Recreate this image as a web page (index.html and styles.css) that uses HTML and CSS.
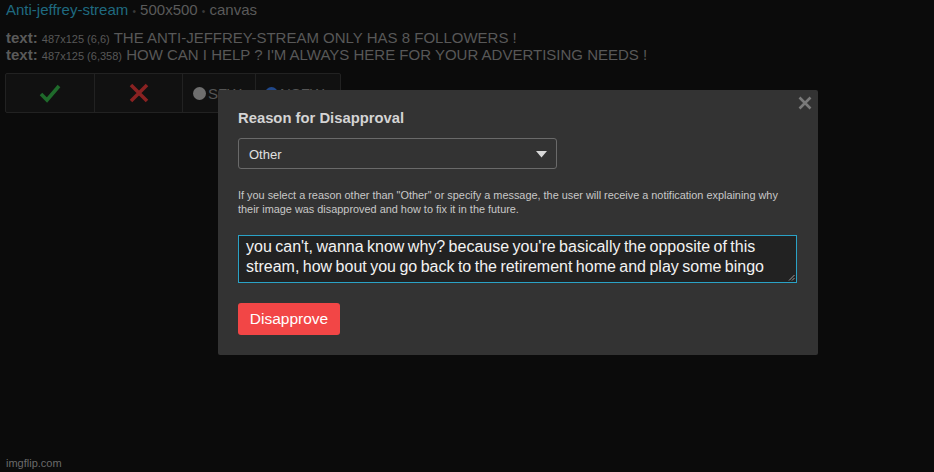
FILE: index.html
```html
<!DOCTYPE html>
<html>
<head>
<meta charset="utf-8">
<link rel="stylesheet" href="styles.css">
</head>
<body>
<div class="page">
  <div class="title-line">
    <a class="title-link">Anti-jeffrey-stream</a>
    <span class="dot">•</span> 500x500 <span class="dot">•</span> canvas
  </div>
  <div class="texts">
    <div class="tline"><b>text:</b> <span class="small">487x125 (6,6)</span> THE ANTI-JEFFREY-STREAM ONLY HAS 8 FOLLOWERS !</div>
    <div class="tline"><b>text:</b> <span class="small">487x125 (6,358)</span> HOW CAN I HELP ? I'M ALWAYS HERE FOR YOUR ADVERTISING NEEDS !</div>
  </div>
  <div class="btn-bar">
    <div class="mod-btn approve">
      <svg width="22" height="20" viewBox="0 0 22 20"><path d="M2 11 L8 17 L20 3" fill="none" stroke="#1f6a2b" stroke-width="3.6"/></svg>
    </div>
    <div class="mod-btn reject">
      <svg width="20" height="20" viewBox="0 0 20 20"><path d="M2 2 L18 18 M18 2 L2 18" fill="none" stroke="#8a2222" stroke-width="3.6"/></svg>
    </div>
    <div class="mod-btn radio"><span class="circle gray"></span>SFW</div>
    <div class="mod-btn radio"><span class="circle blue"></span>NSFW</div>
  </div>
  <div class="footer">imgflip.com</div>
</div>

<div class="modal">
  <div class="close">
    <svg width="14" height="14" viewBox="0 0 14 14"><path d="M1.5 1.5 L12.5 12.5 M12.5 1.5 L1.5 12.5" stroke="#7a7a7a" stroke-width="2.6" fill="none"/></svg>
  </div>
  <div class="modal-title">Reason for Disapproval</div>
  <div class="select">
    <span>Other</span>
    <svg width="11" height="7" viewBox="0 0 11 7"><path d="M0 0 L11 0 L5.5 6.5 Z" fill="#d8d8d8"/></svg>
  </div>
  <p class="info">If you select a reason other than "Other" or specify a message, the user will receive a notification explaining why their image was disapproved and how to fix it in the future.</p>
  <div class="textarea">you can't, wanna know why? because you're basically the opposite of this stream, how bout you go back to the retirement home and play some bingo
    <svg class="grip" width="7" height="7" viewBox="0 0 7 7"><path d="M6.5 1 L1 6.5 M6.5 4 L4 6.5" stroke="#aaa" stroke-width="0.9"/></svg>
  </div>
  <div class="submit">Disapprove</div>
</div>
</body>
</html>
```

FILE: styles.css
```css
html, body {
  margin: 0;
  padding: 0;
  background: #0b0b0b;
  width: 934px;
  height: 472px;
  overflow: hidden;
  font-family: "Liberation Sans", Arial, sans-serif;
}

.page {
  position: relative;
  height: 472px;
  display: flex;
  flex-direction: column;
  padding: 0 0 0 6px;
  box-sizing: border-box;
  color: #565656;
}

.title-line {
  font-size: 15px;
  line-height: 18px;
  padding-top: 1px;
  color: #5a5a5a;
}

.title-link {
  color: #1f6a80;
}

.dot {
  color: #3a3a3a;
  font-size: 10px;
  padding: 0;
}

.texts {
  margin-top: 9px;
  font-size: 15px;
  line-height: 16px;
  color: #585858;
}

.tline b {
  color: #5a5a5a;
}

.small {
  font-size: 11px;
}

.btn-bar {
  margin-top: 9px;
  margin-left: -1px;
  display: flex;
  width: 336px;
  height: 40px;
  box-sizing: border-box;
  border: 1px solid #222;
  border-radius: 2px;
  background: #111;
}

.mod-btn {
  display: flex;
  align-items: center;
  justify-content: center;
  border-right: 1px solid #222;
  box-sizing: border-box;
  font-size: 15px;
  color: #555;
}

.approve { width: 89px; }
.reject { width: 88px; }
.radio { width: 73px; justify-content: flex-start; padding-left: 10px; }
.radio:last-child { border-right: none; width: 84px; padding-left: 9px; }

.circle {
  display: inline-block;
  width: 13px;
  height: 13px;
  border-radius: 50%;
  margin-right: 2px;
}
.circle.gray { background: #6e6e6e; }
.circle.blue { background: #21488a; }

.footer {
  margin-top: auto;
  margin-bottom: 3px;
  font-size: 11px;
  color: #6a6a6a;
}

.modal {
  position: absolute;
  left: 218px;
  top: 90px;
  width: 600px;
  height: 265px;
  box-sizing: border-box;
  background: #333333;
  border-radius: 2px;
  padding: 20px 20px 0 20px;
  color: #ddd;
}

.close {
  position: absolute;
  right: 6px;
  top: 6px;
  width: 14px;
  height: 14px;
}
.close svg { display: block; }

.modal-title {
  font-size: 14.8px;
  font-weight: bold;
  line-height: 16px;
  color: #d4d4d4;
}

.select {
  margin-top: 12px;
  width: 319px;
  height: 31px;
  box-sizing: border-box;
  border: 1px solid #6a6a6a;
  border-radius: 3px;
  display: flex;
  align-items: center;
  justify-content: space-between;
  padding: 1px 9px 0 10px;
  font-size: 13px;
  color: #e0e0e0;
}

.info {
  margin: 19px 0 0 0;
  font-size: 10.9px;
  line-height: 14px;
  color: #c8c8c8;
  width: 561px;
}

.textarea {
  position: relative;
  margin-top: 19px;
  width: 559px;
  height: 48px;
  box-sizing: border-box;
  border: 1px solid #2aa2c6;
  background: #222;
  padding: 1px 1px 0 7px;
  font-size: 16px;
  word-spacing: -1px;
  line-height: 20px;
  color: #f2f2f2;
}

.grip {
  position: absolute;
  right: 1px;
  bottom: 1px;
}

.submit {
  margin-top: 20px;
  width: 102px;
  height: 32px;
  box-sizing: border-box;
  background: #f24646;
  border-radius: 3px;
  color: #fff;
  font-size: 15.5px;
  display: flex;
  align-items: center;
  justify-content: center;
}
```
